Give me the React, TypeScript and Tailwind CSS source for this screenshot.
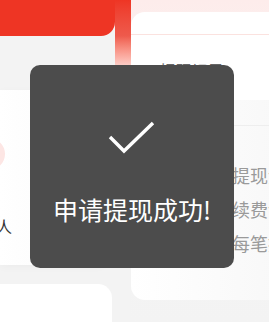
const font = { fontFamily: '"Noto Sans CJK SC", "Noto Sans", sans-serif' };

export default function App() {
  return (
    <div className="relative h-[322px] w-[269px] overflow-hidden bg-[#f3f3f3]" style={font}>
      <div className="flex h-full">
        {/* left column */}
        <div className="flex w-[133px] flex-col">
          <div className="h-[38px] w-[115px] overflow-hidden rounded-br-[14px] bg-[#ee3524] pl-[18px]">
            <div className="-mt-[19px] text-[20px] font-bold leading-[22px] text-white">oFile</div>
          </div>
          <div className="mt-[54px] flex h-[184px] w-[110px] flex-col rounded-br-[14px] bg-gradient-to-r from-white to-[#f8f8f8] shadow-[0_2px_8px_rgba(0,0,0,0.03)]">
            <div className="ml-[-27px] mt-[48px] h-[32px] w-[32px] rounded-full bg-[#fde6e4]" />
            <div className="mt-[47px] text-[16px] leading-[18px] text-[#333]">
              <span className="-ml-[4px]">人</span>
            </div>
          </div>
          <div className="mt-[19px] h-[40px] w-[112px] rounded-tr-[14px] bg-white" />
        </div>

        {/* right column */}
        <div className="flex flex-1">
          <div className="h-[72px] w-[16px] bg-gradient-to-b from-[#ee3524] via-[#ee5a4c] to-[#fbe5e3]" />
          <div className="flex flex-1 flex-col bg-gradient-to-b from-[#fdeceb] via-[#f6f6f6] to-[#f3f3f3]">
            <div className="mt-[12px] flex h-[88px] flex-col rounded-tl-[14px] bg-white">
              <div className="mt-[22px] h-px bg-[#fbe2df]" />
              <div className="ml-[29px] mt-[26px] text-[16px] leading-[18px] text-[#666]">提现记录</div>
            </div>
            <div className="flex h-[200px] flex-col overflow-hidden rounded-l-[14px] bg-gradient-to-r from-white to-[#f7f7f7]">
              <div className="ml-[84px] mt-[25px] h-px bg-[#eeeeee]" />
              <div className="ml-[101px] mt-[39px] flex flex-col gap-[14px] whitespace-nowrap text-[18px] leading-[20px] text-[#9a9a9a]">
                <span>提现金额</span>
                <span>续费说明</span>
                <span>每笔提现</span>
              </div>
            </div>
          </div>
        </div>
      </div>

      {/* toast */}
      <div className="absolute left-[30px] top-[65px] flex h-[203px] w-[204px] flex-col items-center rounded-[10px] bg-[#4c4c4c]">
        <svg className="mt-[55px]" width="50" height="38" viewBox="0 0 50 38" fill="none">
          <path d="M3 17 L17 31 L46 3" stroke="white" strokeWidth="3.4" strokeLinecap="butt" strokeLinejoin="miter" />
        </svg>
        <div className="mt-[36px] text-[25px] leading-[30px] text-white">申请提现成功!</div>
      </div>
    </div>
  );
}
